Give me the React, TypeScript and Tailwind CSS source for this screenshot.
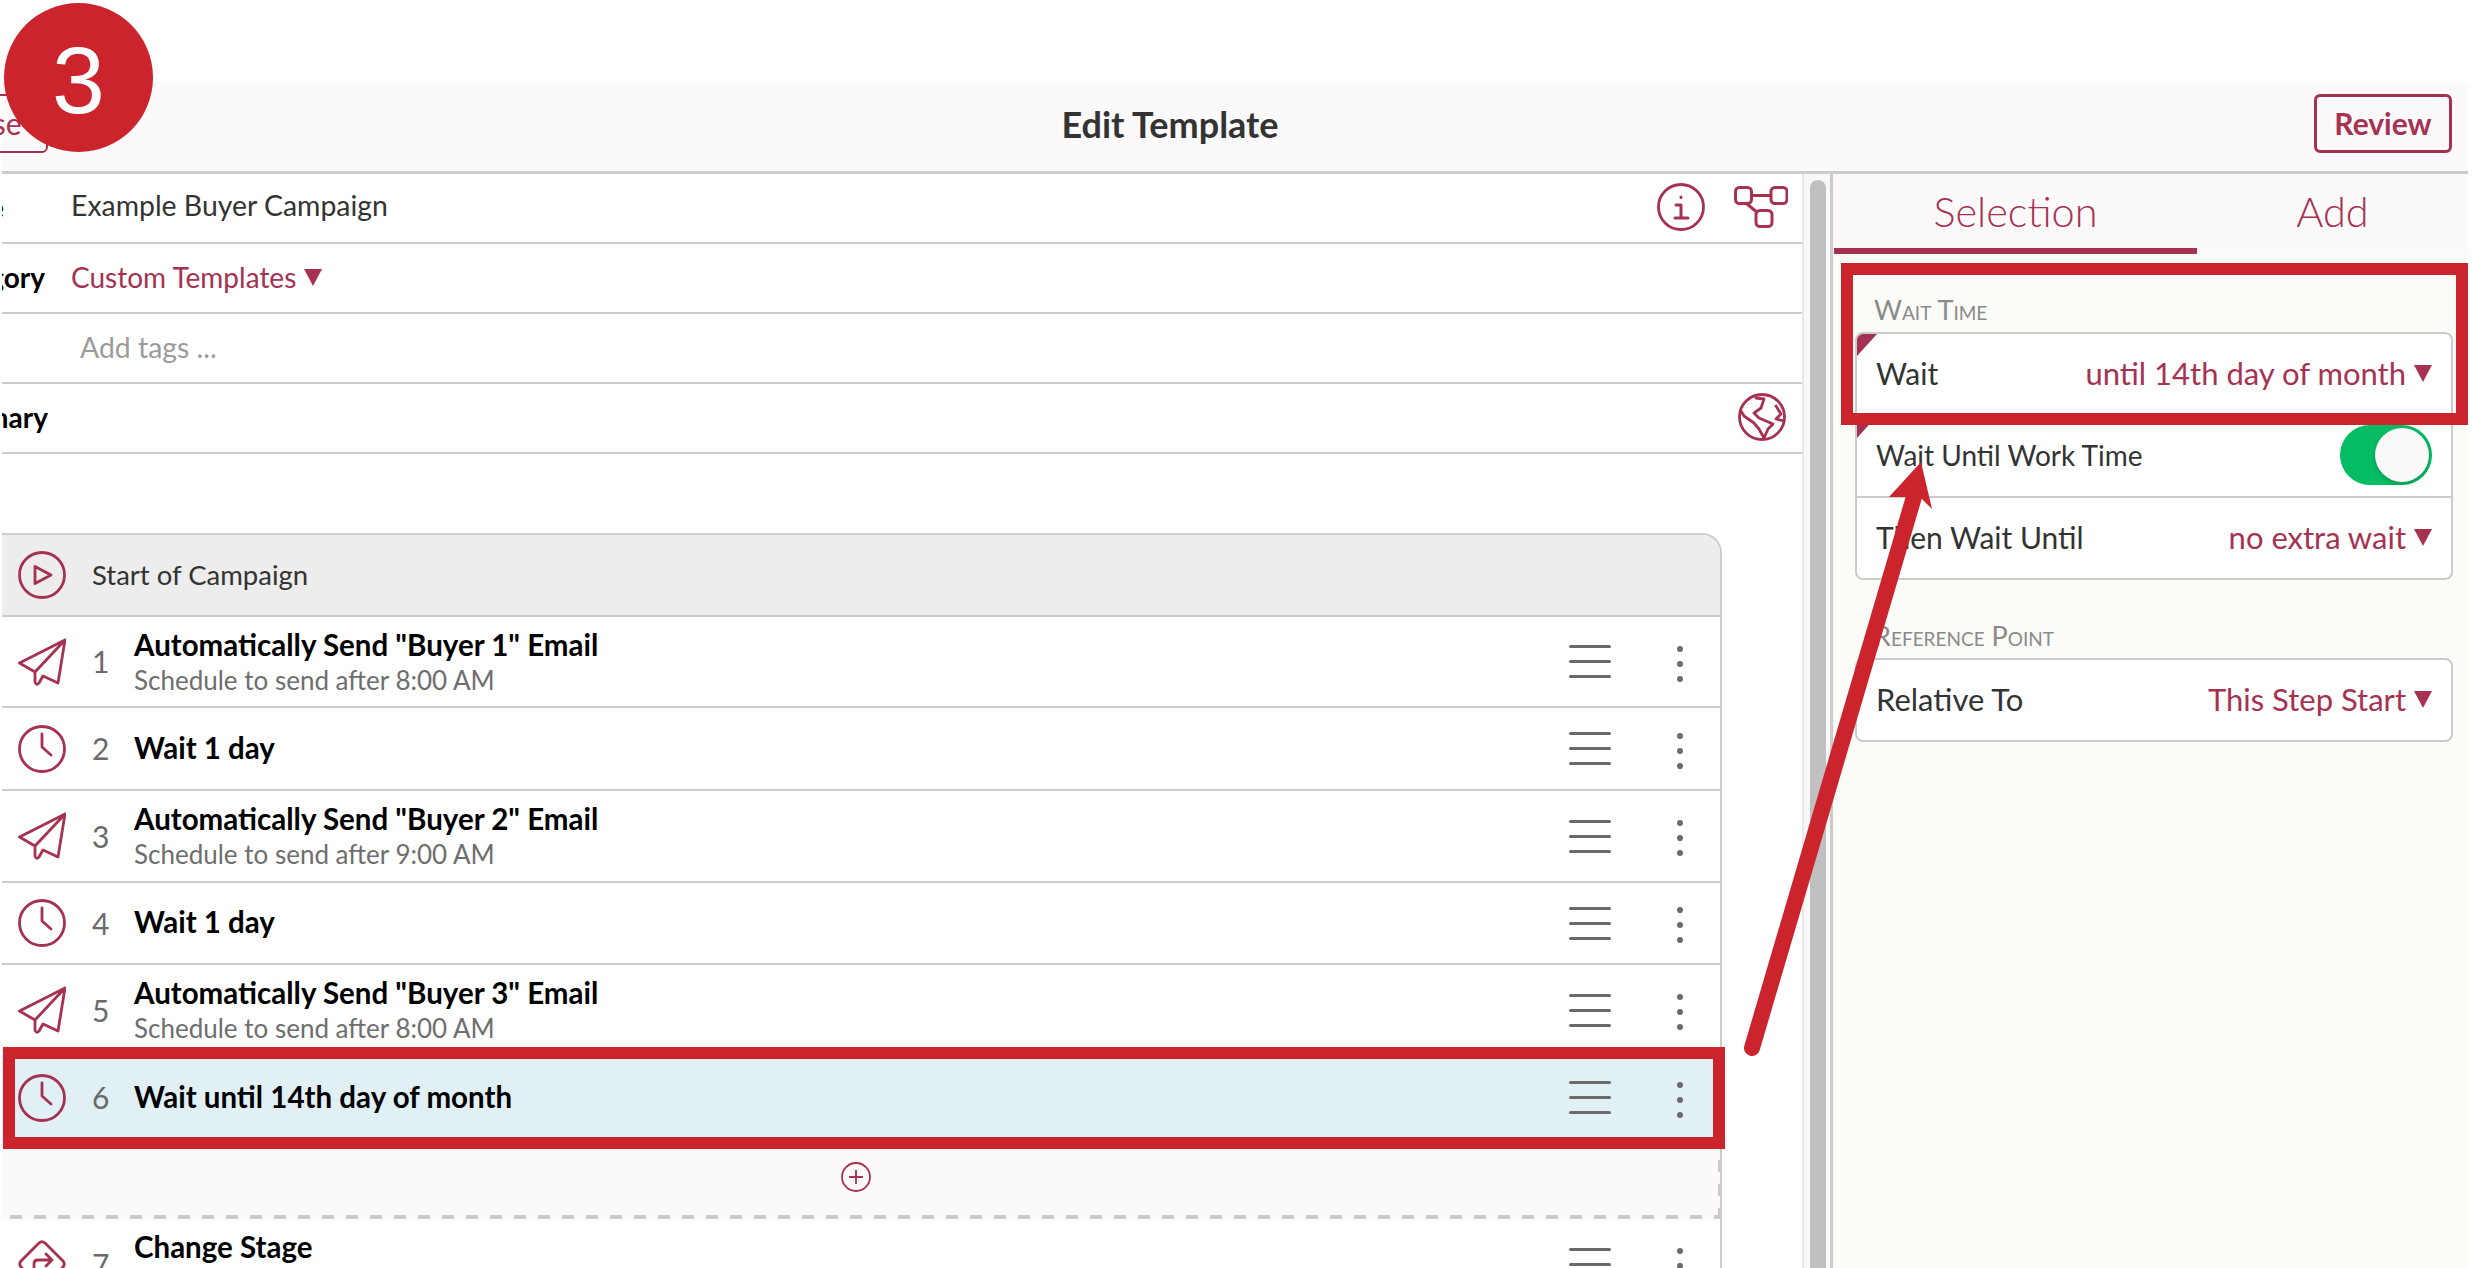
import type { ReactNode } from 'react'

const steps = [
  { n: 1, icon: 'send', title: 'Automatically Send "Buyer 1" Email', sub: 'Schedule to send after 8:00 AM', h: 'h-[89px]' },
  { n: 2, icon: 'clock', title: 'Wait 1 day', h: 'h-[81px]' },
  { n: 3, icon: 'send', title: 'Automatically Send "Buyer 2" Email', sub: 'Schedule to send after 9:00 AM', h: 'h-[90px]' },
  { n: 4, icon: 'clock', title: 'Wait 1 day', h: 'h-[80px]' },
  { n: 5, icon: 'send', title: 'Automatically Send "Buyer 3" Email', sub: 'Schedule to send after 8:00 AM', h: 'h-[90px]' },
]

function Icon({ children, className = 'h-12 w-12' }: { children: ReactNode; className?: string }) {
  return (
    <svg viewBox="0 0 48 48" fill="none" stroke="#a63252" strokeWidth="2.8" strokeLinecap="round" strokeLinejoin="round" className={`shrink-0 ${className}`}>
      {children}
    </svg>
  )
}

function StepIcon({ name }: { name: string }) {
  if (name === 'send') {
    return (
      <Icon>
        <path d="M47 2 1.5 25 17 34v10q1 4 4 1l4-7 15 7zM47 2 17 34" />
      </Icon>
    )
  }
  if (name === 'play') {
    return (
      <Icon>
        <circle cx="24" cy="24" r="22.5" />
        <path d="M17 15.5 33 24l-16 8.5z" />
      </Icon>
    )
  }
  if (name === 'stage') {
    return (
      <Icon>
        <path d="M21 3q3-2.500 6 0l18 18q2.500 3 0 6L27 45q-3 2.500-6 0L3 27q-2.500-3 0-6z" />
        <path d="M16 31v-7q0-4 4-4h14M28 14l6 6-6 6" />
      </Icon>
    )
  }
  return (
    <Icon>
      <circle cx="24" cy="24" r="22.5" />
      <path d="M24 9v13l9 8" />
    </Icon>
  )
}

function RowActions() {
  return (
    <div className="ml-auto flex items-center">
      <div className="flex w-[42px] flex-col gap-[12px]">
        <span className="h-[3px] rounded-full bg-[#6a6a6a]" />
        <span className="h-[3px] rounded-full bg-[#6a6a6a]" />
        <span className="h-[3px] rounded-full bg-[#6a6a6a]" />
      </div>
      <div className="ml-[66px] mr-[37px] flex w-[6px] flex-col gap-[9px] pt-[4px]">
        <span className="h-[6px] rounded-full bg-[#6a6a6a]" />
        <span className="h-[6px] rounded-full bg-[#6a6a6a]" />
        <span className="h-[6px] rounded-full bg-[#6a6a6a]" />
      </div>
    </div>
  )
}

function Step({ n, icon, title, sub, h, className = '' }: { n: number; icon: string; title: string; sub?: string; h: string; className?: string }) {
  return (
    <div className={`flex items-center pl-[16px] ${h} ${className}`}>
      <StepIcon name={icon} />
      <span className="ml-[26px] w-[42px] text-[30px] text-[#6a6a6a]">{n}</span>
      <div className="-mt-[2px]">
        <div className="text-[29.5px] font-bold leading-[38px] text-black">{title}</div>
        {sub && <div className="text-[26px] leading-[32px] text-[#6e6e6e]">{sub}</div>}
      </div>
      <RowActions />
    </div>
  )
}

function Caret() {
  return <span className="ml-[8px] inline-block h-0 w-0 border-x-[9.5px] border-t-[17px] border-x-transparent border-t-[#a63252]" />
}

function Corner() {
  return <span className="absolute left-0 top-0 h-0 w-0 border-r-[20px] border-t-[22px] border-r-transparent border-t-[#a63252]" />
}

function FormRow({ label, labelClass = 'w-[46px]', children }: { label?: string; labelClass?: string; children?: ReactNode }) {
  return (
    <div className="flex h-[70px] items-center border-b-2 border-[#cbcbcb] pb-[2px]">
      <div className={`flex shrink-0 justify-end overflow-hidden text-[28px] font-bold text-black ${labelClass}`}>
        <span className="whitespace-nowrap">{label}</span>
      </div>
      <div className="flex flex-1 items-center pl-[23px] pr-[14px] text-[28.4px]">{children}</div>
    </div>
  )
}

function SideRow({ label, value, last, corner, labelClass = 'text-[30px]', children }: { label: string; value?: string; last?: boolean; corner?: boolean; labelClass?: string; children?: ReactNode }) {
  return (
    <div className={`relative flex items-center justify-between pb-[2px] pl-[19px] pr-[19px] ${last ? 'h-[80px]' : 'h-[82px] border-b-2 border-[#cbcbcb]'}`}>
      {corner && <Corner />}
      <span className={`text-[#333] ${labelClass}`}>{label}</span>
      {value && (
        <span className="flex items-center text-[31px] text-[#a63252]">
          {value}
          <Caret />
        </span>
      )}
      {children}
    </div>
  )
}

function SectionLabel({ children }: { children: ReactNode }) {
  return <div className="pl-[19px] text-[27px] leading-[32px] text-[#8a8a8a] [font-variant:small-caps]">{children}</div>
}

export default function App() {
  return (
    <div className="relative h-[1268px] w-[2472px] overflow-hidden bg-white font-['Lato',sans-serif] text-[#333]">
      <div className="pl-[2px] pr-[4px] pt-[82px]">
        <header className="relative flex h-[92px] items-center justify-center border-b-[3px] border-[#cbcbcb] bg-[#fbf9fa] pb-[6px] pr-[130px]">
          <div className="absolute left-[-80px] top-[12px] flex h-[59px] w-[126px] items-center justify-center rounded-[6px] border-2 border-[#a63252] text-[30px] text-[#a63252]">Close</div>
          <h1 className="text-[36px] font-bold text-[#333]">Edit Template</h1>
          <div className="absolute right-[16px] top-[12px] flex h-[59px] w-[138px] items-center justify-center rounded-[6px] border-[3px] border-[#a63252] text-[30px] font-bold text-[#a63252]">Review</div>
        </header>

        <div className="flex h-[1100px]">
          <main className="w-[1800px] shrink-0">
            <FormRow label="Name" labelClass="mr-[44px] w-[2px]">
              <span className="-mt-[3px]">Example Buyer Campaign</span>
              <span className="ml-auto flex items-center gap-[29px]">
                <Icon>
                  <circle cx="24" cy="24" r="22.5" />
                  <path d="M24 14v.5M19 22h5v13M18 35h13" strokeWidth="3" />
                </Icon>
                <svg viewBox="0 0 54 42" fill="none" stroke="#a63252" strokeWidth="3" className="h-[42px] w-[54px]">
                  <rect x="1.500" y="1.500" width="16" height="16" rx="4" />
                  <rect x="37" y="1.500" width="16" height="16" rx="4" />
                  <rect x="22" y="24.500" width="16" height="16" rx="4" />
                  <path d="M17.500 9.500H37M13 18l11 9" />
                </svg>
              </span>
            </FormRow>
            <FormRow label="Category" labelClass="mr-[3px] w-[43px]">
              <span className="flex items-center text-[28px] text-[#a63252]">
                Custom Templates
                <Caret />
              </span>
            </FormRow>
            <FormRow>
              <span className="pl-[9px] text-[#9b9b9b]">Add tags ...</span>
            </FormRow>
            <FormRow label="Summary">
              <span className="ml-auto mr-[2px]">
                <Icon>
                  <circle cx="24" cy="24" r="22.5" />
                  <path d="m18 5 8 1-3 9-7 5 5 5 7 3 7 3-5 5-4 9-5-9-5-6-10-7-3-5M38 13l5 8-5 5 8 2" />
                </Icon>
              </span>
            </FormRow>

            <section className="mt-[79px] w-[1720px] overflow-hidden rounded-tr-[20px] border-r-2 border-t-2 border-[#cbcbcb]">
              <div className="flex h-[82px] items-center border-b-2 border-[#cbcbcb] bg-[#ededed] pl-[16px]">
                <StepIcon name="play" />
                <span className="ml-[26px] text-[27.5px] text-[#333]">Start of Campaign</span>
              </div>
              {steps.map((s) => (
                <div key={s.n} className="border-b-2 border-[#cbcbcb]">
                  <Step {...s} h={s.h} />
                </div>
              ))}
              <Step n={6} icon="clock" title="Wait until 14th day of month" h="h-[81px]" className="bg-[#e1f0f5]" />
              <div className="relative flex h-[77px] items-center justify-center bg-[#fbf9fa] pr-[10px]">
                <svg viewBox="0 0 30 30" fill="none" stroke="#a63252" strokeWidth="1.800" className="h-[30px] w-[30px]">
                  <circle cx="15" cy="15" r="14" />
                  <path d="M15 8v14M8 15h14" />
                </svg>
                <span className="absolute bottom-0 right-[-2px] top-[22px] w-[4px] bg-[repeating-linear-gradient(180deg,#cbcbcb_0_12px,transparent_12px_24px)]" />
              </div>
              <div className="bg-[#fbf9fa] pl-[8px]">
                <div className="h-[4px] bg-[repeating-linear-gradient(90deg,#cbcbcb_0_12px,transparent_12px_24px)]" />
              </div>
              <Step n={7} icon="stage" title="Change Stage" sub="Move to stage" h="h-[90px]" />
            </section>
          </main>

          <div className="flex w-[32px] shrink-0 border-l-2 border-[#e8e8e8] bg-[#f8f8f8] pl-[6px]">
            <div className="mt-[6px] h-full w-[16px] rounded-t-full bg-[#c0c0c0]" />
            <div className="ml-[4px] h-full w-[3px] bg-[#cbcbcb]" />
          </div>

          <aside className="flex-1 bg-[#fbfbf8]">
            <div className="flex h-[80px] bg-[#fbf9fa] text-[41.5px] font-light text-[#a63252]">
              <div className="flex w-[363px] items-center justify-center border-b-[6px] border-[#a63252]">Selection</div>
              <div className="flex flex-1 items-center justify-center pb-[6px]">Add</div>
            </div>
            <div className="pl-[21px] pr-[15px] pt-[40px]">
              <SectionLabel>Wait Time</SectionLabel>
              <div className="mt-[6px] overflow-hidden rounded-[8px] border-2 border-[#cbcbcb] bg-white">
                <SideRow label="Wait" value="until 14th day of month" corner />
                <SideRow label="Wait Until Work Time" labelClass="text-[28px]" corner>
                  <span className="flex h-[60px] w-[92px] items-center justify-end rounded-full bg-[#04bc62] pr-[3px]">
                    <span className="h-[54px] w-[54px] rounded-full bg-[#fbf9fa] shadow-[0_2px_4px_rgba(0,0,0,0.2)]" />
                  </span>
                </SideRow>
                <SideRow label="Then Wait Until" value="no extra wait" last />
              </div>
              <div className="mt-[40px]">
                <SectionLabel>Reference Point</SectionLabel>
              </div>
              <div className="mt-[6px] overflow-hidden rounded-[8px] border-2 border-[#cbcbcb] bg-white">
                <SideRow label="Relative To" labelClass="text-[31px]" value="This Step Start" last />
              </div>
            </div>
          </aside>
        </div>
      </div>

      {/* annotation layer */}
      <div className="absolute left-[4px] top-[3px] flex h-[149px] w-[149px] items-center justify-center rounded-full bg-[#cc242c] pt-[6px] font-['Liberation_Sans',sans-serif] text-[95px] leading-none text-white">3</div>
      <div className="absolute left-[1841px] top-[263px] h-[162px] w-[627px] border-[12px] border-[#cc242c]" />
      <div className="absolute left-[3px] top-[1047px] h-[102px] w-[1722px] border-[12px] border-[#cc242c]" />
      <svg className="pointer-events-none absolute inset-0 h-[1268px] w-[2472px]" viewBox="0 0 2472 1268" fill="none">
        <path d="M1752 1048 1916 490" stroke="#cc242c" strokeWidth="16" strokeLinecap="round" />
        <path d="M1921 462 1932 509 1920 497 1889 497z" fill="#cc242c" />
      </svg>
    </div>
  )
}
